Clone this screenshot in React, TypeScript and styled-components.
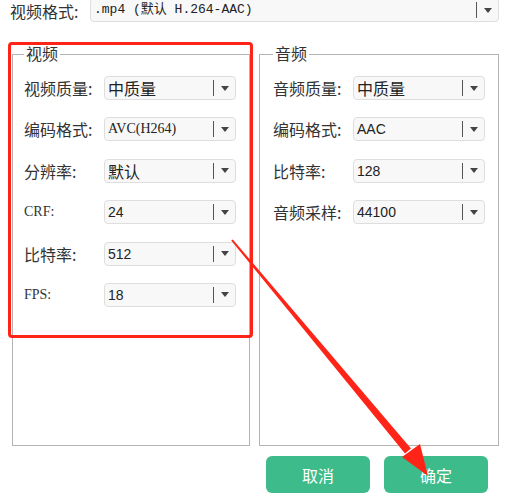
import React from "react";
import styled, { createGlobalStyle } from "styled-components";

const Global = createGlobalStyle`
  html, body { margin: 0; padding: 0; background: #ffffff; }
  body { font-family: "Noto Sans CJK SC", "Noto Sans", sans-serif; color: #333; }
`;

const Page = styled.div`
  position: relative;
  width: 505px;
  height: 499px;
  overflow: hidden;
  box-sizing: border-box;
  padding: 0 6px 0 10px;
  display: flex;
  flex-direction: column;
`;

const TopRow = styled.div`
  display: flex;
  align-items: flex-start;
  height: 22px;
`;

const TopLabel = styled.div`
  width: 80px;
  font-size: 16px;
  line-height: 22px;
  color: #333;
  white-space: nowrap;
`;

const SelectBox = styled.div<{ $width?: number; $lift?: boolean }>`
  display: flex;
  align-items: center;
  box-sizing: border-box;
  height: 24px;
  ${(p) => (p.$width ? `width: ${p.$width}px;` : "flex: 1;")}
  ${(p) => (p.$lift ? "margin-top: -2px;" : "")}
  border: 1px solid #dedede;
  border-radius: 4px;
  background: #f8f8f8;
  padding-left: 3px;
`;

const Value = styled.span<{ $kind?: Kind }>`
  flex: 1;
  white-space: nowrap;
  color: #222;
  font-family: ${(p) =>
    p.$kind === "mono"
      ? `"Liberation Mono", "Noto Sans CJK SC", monospace`
      : p.$kind === "serif"
      ? `"Liberation Serif", "Noto Sans CJK SC", serif`
      : p.$kind === "sans"
      ? `"Liberation Sans", "Noto Sans CJK SC", sans-serif`
      : `"Noto Sans CJK SC", sans-serif`};
  font-size: ${(p) =>
    p.$kind === "mono" ? "13px" : p.$kind === "sans" || p.$kind === "serif" ? "14px" : "16px"};
  line-height: 22px;
`;

const Divider = styled.span`
  width: 1.5px;
  height: 16px;
  background: #555;
  margin-right: 7px;
`;

const Caret = styled.span`
  width: 0;
  height: 0;
  border-left: 4px solid transparent;
  border-right: 4px solid transparent;
  border-top: 5px solid #444;
  margin-right: 6px;
`;

const Columns = styled.div`
  display: flex;
  gap: 9px;
  margin-top: 32px;
  padding-left: 2px;
`;

const Group = styled.div<{ $width: number; $pad: number }>`
  box-sizing: border-box;
  width: ${(p) => p.$width}px;
  height: 392px;
  border: 1px solid #b4b4b4;
  padding: 0 0 0 ${(p) => p.$pad}px;
  display: flex;
  flex-direction: column;
`;

const GroupTitle = styled.div`
  align-self: flex-start;
  margin: -12px 0 0 0;
  padding: 0 2px;
  background: #fff;
  font-size: 16px;
  line-height: 20px;
  color: #333;
`;

const Rows = styled.div`
  display: flex;
  flex-direction: column;
  gap: 17.4px;
  margin-top: 13px;
`;

const Row = styled.div`
  display: flex;
  align-items: center;
  height: 24px;
`;

const Label = styled.div<{ $serif?: boolean }>`
  width: 80px;
  white-space: nowrap;
  color: #333;
  font-family: ${(p) =>
    p.$serif ? `"Liberation Serif", serif` : `"Noto Sans CJK SC", sans-serif`};
  font-size: ${(p) => (p.$serif ? "14px" : "16px")};
  line-height: 24px;
`;

const ButtonRow = styled.div`
  display: flex;
  justify-content: flex-end;
  gap: 14px;
  padding-right: 11px;
  margin-top: 10px;
`;

const Button = styled.button`
  width: 104px;
  height: 37px;
  border: none;
  border-radius: 6px;
  background: #3dbb8a;
  color: #fff;
  font-family: "Noto Sans CJK SC", sans-serif;
  font-size: 16px;
  padding: 0;
`;

const RedBox = styled.div`
  position: absolute;
  left: 8px;
  top: 42px;
  width: 245px;
  height: 296px;
  box-sizing: border-box;
  border: 3px solid #ff2418;
  border-radius: 4px;
  pointer-events: none;
`;

const ArrowSvg = styled.svg`
  position: absolute;
  left: 0;
  top: 0;
  pointer-events: none;
`;

type Kind = "cjk" | "mono" | "sans" | "serif";

const Select: React.FC<{ value: string; kind?: Kind; width?: number; lift?: boolean }> = ({
  value,
  kind,
  width,
  lift,
}) => (
  <SelectBox $width={width} $lift={lift}>
    <Value $kind={kind}>{value}</Value>
    <Divider />
    <Caret />
  </SelectBox>
);

const video: { label: string; value: string; kind: Kind; serifLabel?: boolean }[] = [
  { label: "视频质量:", value: "中质量", kind: "cjk" },
  { label: "编码格式:", value: "AVC(H264)", kind: "serif" },
  { label: "分辨率:", value: "默认", kind: "cjk" },
  { label: "CRF:", value: "24", kind: "sans", serifLabel: true },
  { label: "比特率:", value: "512", kind: "sans" },
  { label: "FPS:", value: "18", kind: "sans", serifLabel: true },
];

const audio: { label: string; value: string; kind: Kind }[] = [
  { label: "音频质量:", value: "中质量", kind: "cjk" },
  { label: "编码格式:", value: "AAC", kind: "sans" },
  { label: "比特率:", value: "128", kind: "sans" },
  { label: "音频采样:", value: "44100", kind: "sans" },
];

export default function App() {
  return (
    <>
      <Global />
      <Page>
        <TopRow>
          <TopLabel>视频格式:</TopLabel>
          <Select value=".mp4 (默认 H.264-AAC)" kind="mono" lift />
        </TopRow>
        <Columns>
          <Group $width={238} $pad={11}>
            <GroupTitle>视频</GroupTitle>
            <Rows>
              {video.map((r) => (
                <Row key={r.label}>
                  <Label $serif={r.serifLabel}>{r.label}</Label>
                  <Select value={r.value} kind={r.kind} width={132} />
                </Row>
              ))}
            </Rows>
          </Group>
          <Group $width={240} $pad={13}>
            <GroupTitle>音频</GroupTitle>
            <Rows>
              {audio.map((r) => (
                <Row key={r.label}>
                  <Label>{r.label}</Label>
                  <Select value={r.value} kind={r.kind} width={132} />
                </Row>
              ))}
            </Rows>
          </Group>
        </Columns>
        <ButtonRow>
          <Button>取消</Button>
          <Button>确定</Button>
        </ButtonRow>
        <RedBox />
        <ArrowSvg width="505" height="499" viewBox="0 0 505 499">
          <polygon points="232.8,239.4 231.2,240.6 405,453.6 411,448.4" fill="#ff2418" />
          <polygon points="428,476 402,457 420,444" fill="#ff2418" />
        </ArrowSvg>
      </Page>
    </>
  );
}
